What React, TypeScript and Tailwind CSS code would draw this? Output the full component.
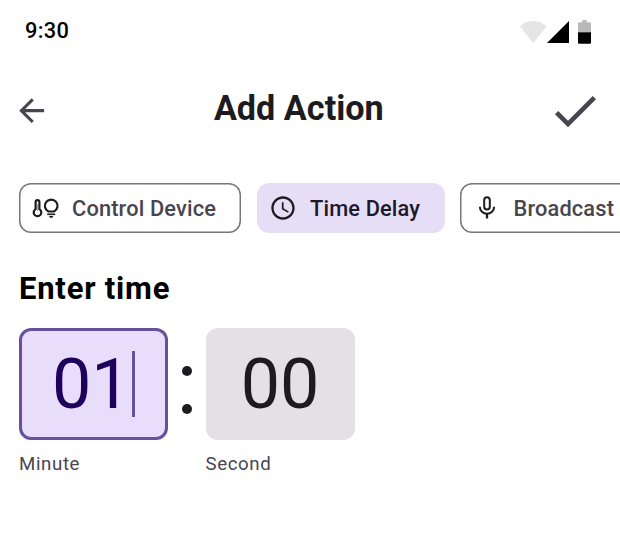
import React from "react";

type IconProps = { className?: string };

const BackIcon = ({ className }: IconProps) => (
  <svg viewBox="0 0 24 24" className={className} fill="currentColor">
    <path d="M20 11H7.83l5.59-5.59L12 4l-8 8 8 8 1.41-1.41L7.83 13H20v-2z" />
  </svg>
);

const CheckIcon = ({ className }: IconProps) => (
  <svg viewBox="0 0 24 24" className={className} fill="currentColor">
    <path d="M9 16.17 4.83 12l-1.42 1.41L9 19 21 7l-1.41-1.41z" />
  </svg>
);

const ClockIcon = ({ className }: IconProps) => (
  <svg viewBox="0 0 24 24" className={className} fill="currentColor">
    <path d="M11.99 2C6.47 2 2 6.48 2 12s4.47 10 9.99 10C17.52 22 22 17.52 22 12S17.52 2 11.99 2zM12 20c-4.42 0-8-3.58-8-8s3.58-8 8-8 8 3.58 8 8-3.58 8-8 8zm.5-13H11v6l5.25 3.15.75-1.23-4.5-2.67z" />
  </svg>
);

const MicIcon = ({ className }: IconProps) => (
  <svg viewBox="0 0 24 24" className={className} fill="none" stroke="currentColor" strokeWidth="1.700">
    <rect x="9.600" y="2.850" width="4.800" height="10.500" rx="2.400" />
    <path d="M5.850 11c0 3.400 2.800 5.950 6.150 5.950s6.150-2.550 6.150-5.950" />
    <path d="M12 17v4" strokeWidth="2" />
  </svg>
);

const DeviceIcon = ({ className }: IconProps) => (
  <svg viewBox="0 0 28 20" className={className} fill="none" stroke="currentColor" strokeWidth="2.200">
    <path d="M3.600 11.100V4a1.900 1.900 0 0 1 3.800 0v7.100a3.800 3.800 0 1 1-3.800 0z" />
    <path d="M5.500 6v7" strokeWidth="0.700" opacity="0.500" />
    <path d="M16.400 13.500a6.300 6.300 0 1 1 5.600 0z" />
    <path d="M15.200 16.300h8" strokeWidth="1.600" />
    <path d="M17 18h4.400l-1 1.700h-2.400z" fill="currentColor" stroke="none" />
  </svg>
);

const Digit = ({ children }: { children: React.ReactNode }) => (
  <span className="text-[70px] leading-[100px]">{children}</span>
);

export default function App() {
  return (
    <main className="h-[548px] w-[620px] overflow-hidden bg-white font-['Roboto',sans-serif]">
      <div className="flex h-[60px] items-center justify-between pr-[29px] pl-[25px]">
        <span className="pt-[2px] text-[21.800px] font-medium tracking-[0.300px] text-black">9:30</span>
        <div className="mt-1 flex items-center">
          <svg viewBox="0 0 27 22" className="h-[22px] w-[27px]">
            <path d="M0 5.500C7.500-1.800 19-1.800 26.500 5.500L13.200 22z" fill="#e5e5e5" />
          </svg>
          <svg viewBox="0 0 22 22" className="h-[22px] w-[22px]">
            <path d="M22 0v22H0z" fill="#000" />
          </svg>
          <svg viewBox="0 0 13 24" className="ml-[9px] h-6 w-[13px]">
            <path d="M0 12V3.500Q0 2.300 1.200 2.300H4.300V0h4.400v2.300h3.100q1.200 0 1.200 1.200V12z" fill="#b9b9b9" />
            <path d="M0 12.300h13v10.200q0 1.200-1.200 1.200H1.200Q0 23.700 0 22.500z" fill="#000" />
          </svg>
        </div>
      </div>

      <header className="flex h-24 items-center justify-between pr-[16.500px] pl-[12.800px] text-[#49454f]">
        <BackIcon className="mt-[5px] size-[37.330px]" />
        <h1 className="pt-px text-[34.200px] font-bold text-[#1d1b20]">Add Action</h1>
        <CheckIcon className="mt-[5px] size-[56px]" />
      </header>

      <nav className="mt-[27px] flex gap-[16px] pl-[19px] text-[21.800px] font-medium tracking-[0.150px] text-[#49454f]">
        <div className="flex h-[50px] w-[222px] shrink-0 items-center rounded-xl pl-[13px] shadow-[inset_0_0_0_1.5px_#79747e]">
          <DeviceIcon className="mr-3 h-5 w-7 text-[#1c1b1f]" />
          <span className="pt-[2px]">Control Device</span>
        </div>
        <div className="flex h-[50px] w-[188px] shrink-0 items-center rounded-xl bg-[#e6def6] pl-3 text-[#1d192b]">
          <ClockIcon className="mr-[13px] size-7 text-[#1c1b1f]" />
          <span className="pt-[2px]">Time Delay</span>
        </div>
        <div className="-ml-px flex h-[50px] w-[190px] shrink-0 items-center rounded-xl pl-[13px] shadow-[inset_0_0_0_1.5px_#79747e]">
          <MicIcon className="mr-[12.500px] size-7 text-[#1c1b1f]" />
          <span className="pt-[2px]">Broadcast</span>
        </div>
      </nav>

      <section className="mt-[35px] pl-[19px]">
        <h2 className="pt-px text-[31px] leading-[39px] font-bold tracking-[0.780px] text-black">Enter time</h2>
        <div className="mt-5 flex">
          <div className="w-[149px]">
            <div className="flex h-28 items-center rounded-xl border-[3px] border-[#65519f] bg-[#e8defc] pl-[30px] text-[#1e005d]">
              <Digit>01</Digit>
              <span className="ml-px h-[66px] w-[3px] bg-[#65519f]" />
            </div>
            <p className="mt-[10px] text-[18.670px] leading-7 tracking-[0.620px] text-[#49454f]">Minute</p>
          </div>
          <div className="flex h-28 w-[37.500px] flex-col items-center justify-center gap-[28px] pt-[12px]">
            <span className="size-[10px] rounded-full bg-[#1d1b20]" />
            <span className="size-[10px] rounded-full bg-[#1d1b20]" />
          </div>
          <div className="w-[149px]">
            <div className="flex h-28 items-center justify-center rounded-xl bg-[#e5e0e6] text-[#1d1b20]">
              <Digit>00</Digit>
            </div>
            <p className="mt-[10px] text-[18.670px] leading-7 tracking-[0.620px] text-[#49454f]">Second</p>
          </div>
        </div>
      </section>
    </main>
  );
}
